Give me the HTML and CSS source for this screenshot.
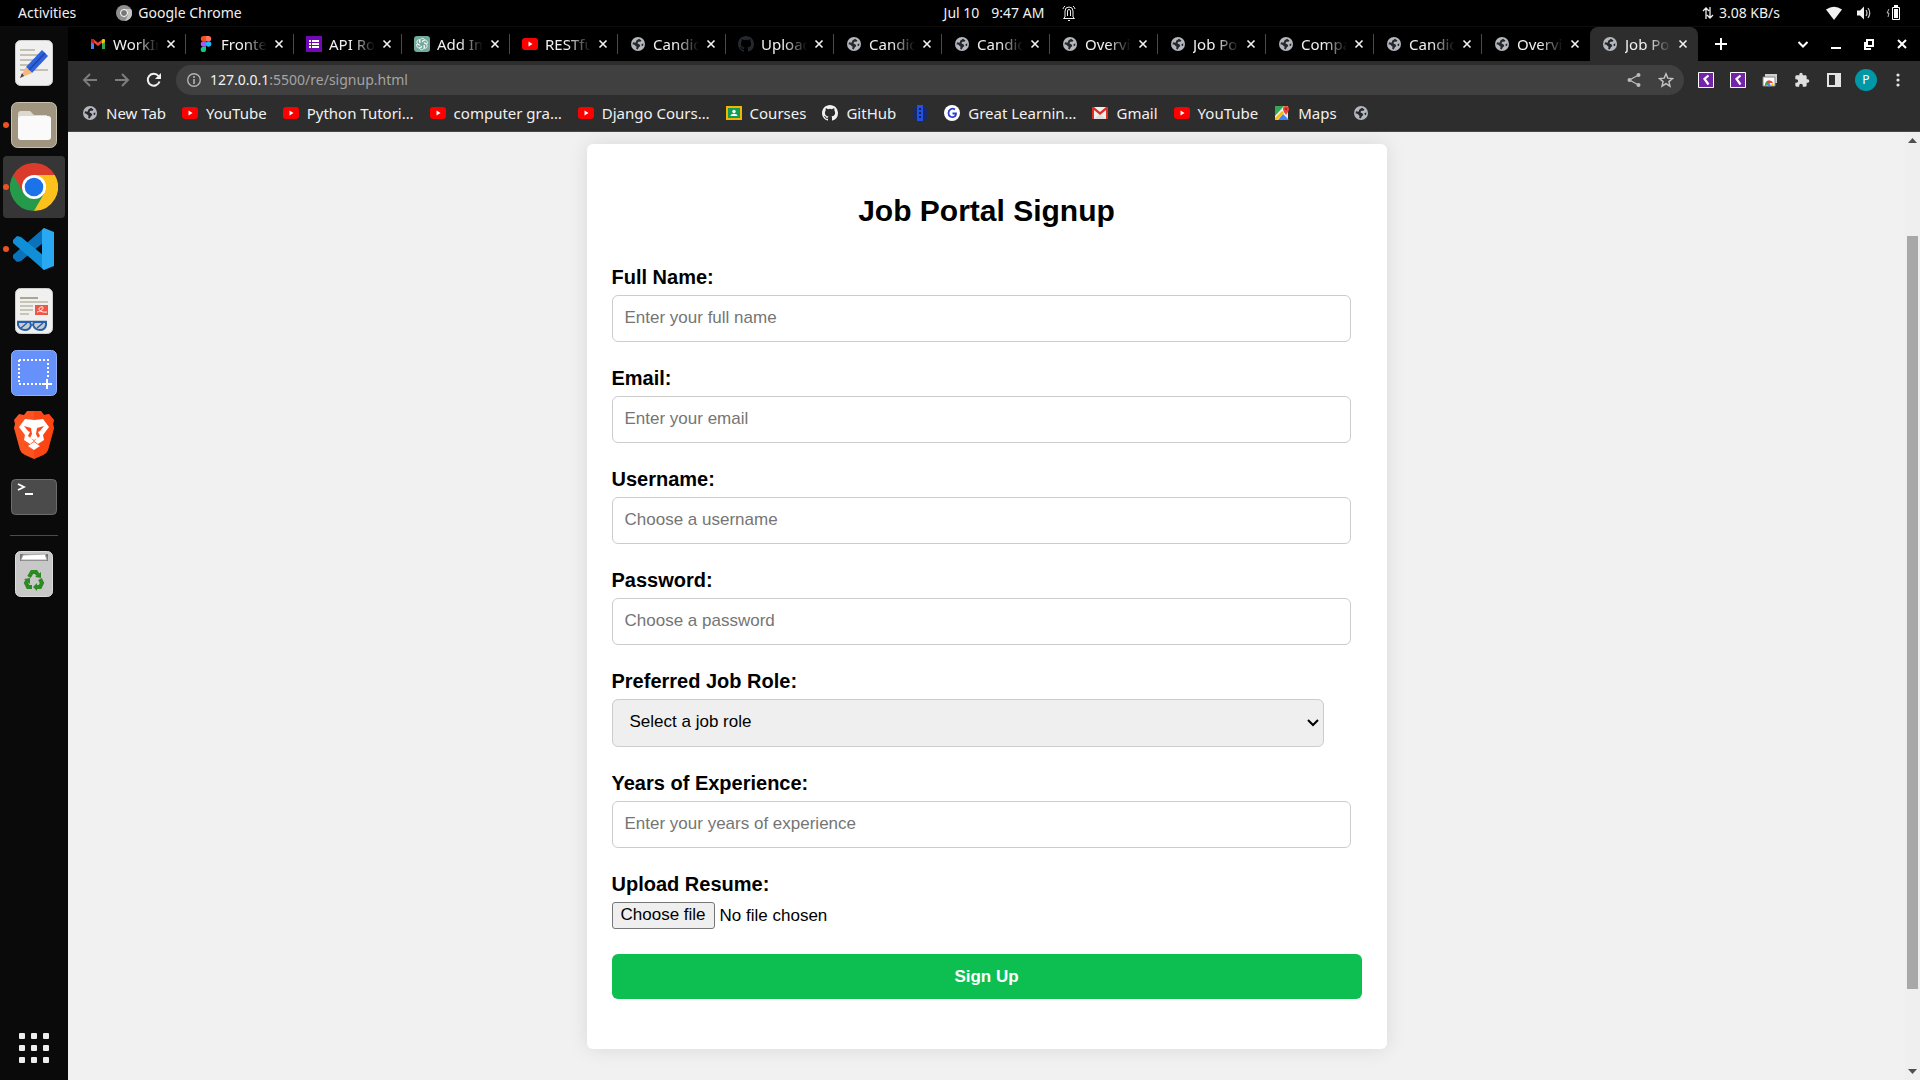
FILE: index.html
```html
<!DOCTYPE html>
<html lang="en">
<head>
<meta charset="utf-8">
<title>Job Portal Signup</title>
<link rel="stylesheet" href="styles.css">
</head>
<body>
<svg class="sprite" aria-hidden="true">
  <symbol id="globe" viewBox="0 0 16 16"><circle cx="8" cy="8" r="7" fill="#b4b8be"/><path d="M9 2.800l2.500 1.700-1 1.300H8.300L7.400 7.300l2.200 1.200.7 1.600-1.600 1.500-.8 1.800-1.700-.4.3-2.200L4 8.600 2.500 8.400 3 6.300l2.500.4.9-2.100z" fill="#25272a"/><path d="M11.500 8l2-.6-.6 2.800-1.300-.6z" fill="#25272a"/></symbol>
  <symbol id="youtube" viewBox="0 0 16 16"><rect y="2" width="16" height="12" rx="3" fill="#f00"/><path d="M6.500 5.500v5l4-2.500z" fill="#fff"/></symbol>
  <symbol id="gmail" viewBox="0 0 16 16"><path d="M1 4v9h3V7z" fill="#4285f4"/><path d="M15 4v9h-3V7z" fill="#34a853"/><path d="M1 4.500C1 3 2.500 2.500 3.500 3.300L8 6.700l4.500-3.400C13.500 2.500 15 3 15 4.500L8 10z" fill="#ea4335"/><path d="M12 3.700c1.500-1.200 3-.4 3 .8V6l-3 2z" fill="#fbbc04"/><path d="M4 3.700C2.500 2.500 1 3.300 1 4.500V6l3 2z" fill="#c5221f"/></symbol>
  <symbol id="gmail-old" viewBox="0 0 16 16"><path d="M0 2h16v12H0z" fill="#eee"/><path d="M2 14l6-5 6 5z" fill="#ddd"/><path d="M0 2h2l6 5 6-5h2v12h-2V5L8 10 2 5v9H0z" fill="#d93025"/></symbol>
  <symbol id="figma" viewBox="0 0 16 16"><path d="M5.500 0H8v5.300H5.500a2.650 2.650 0 010-5.300z" fill="#f24e1e"/><path d="M8 0h2.500a2.650 2.650 0 010 5.300H8z" fill="#ff7262"/><path d="M5.500 5.300H8v5.400H5.500a2.700 2.700 0 010-5.400z" fill="#a259ff"/><circle cx="10.600" cy="8" r="2.700" fill="#1abcfe"/><path d="M5.500 10.700H8v2.600a2.650 2.650 0 11-2.500-2.600z" fill="#0acf83"/></symbol>
  <symbol id="forms" viewBox="0 0 16 16"><path d="M0 0h16v16H0z" fill="#7209b7"/><path d="M3 4h2v2H3zm3 0h7v2H6zM3 7h2v2H3zm3 0h7v2H6zm-3 3h2v2H3zm3 0h7v2H6z" fill="#fff"/></symbol>
  <symbol id="chatgpt" viewBox="0 0 16 16"><rect width="16" height="16" rx="3" fill="#74aa9c"/><g fill="none" stroke="#fff" stroke-width=".8"><path id="petal" d="M6 7V4.500c0-2.500 3.500-3 4.500-.8L8 5.200"/><use href="#petal" transform="rotate(60 8 8)"/><use href="#petal" transform="rotate(120 8 8)"/><use href="#petal" transform="rotate(180 8 8)"/><use href="#petal" transform="rotate(240 8 8)"/><use href="#petal" transform="rotate(300 8 8)"/></g></symbol>
  <symbol id="github" viewBox="0 0 16 16"><path fill="currentColor" d="M8 0C3.580 0 0 3.580 0 8c0 3.540 2.290 6.530 5.470 7.590.4.070.55-.17.55-.38 0-.19-.01-.82-.01-1.490-2.010.37-2.530-.49-2.690-.94-.09-.23-.48-.94-.82-1.130-.28-.15-.68-.52-.01-.53.63-.01 1.080.58 1.230.82.72 1.210 1.870.87 2.330.66.07-.52.28-.87.51-1.070-1.780-.2-3.640-.89-3.640-3.950 0-.87.31-1.590.82-2.150-.08-.2-.36-1.020.08-2.120 0 0 .67-.21 2.200.82a7.600 7.600 0 014 0c1.530-1.040 2.200-.82 2.200-.82.44 1.100.16 1.920.08 2.120.51.56.82 1.270.82 2.150 0 3.070-1.870 3.750-3.650 3.950.29.25.54.73.54 1.480 0 1.070-.01 1.930-.01 2.200 0 .21.15.46.55.38A8 8 0 0016 8c0-4.420-3.580-8-8-8z"/></symbol>
  <symbol id="classroom" viewBox="0 0 16 16"><path d="M0 1h16v14H0z" fill="#f4b400"/><path d="M2 3h12v10H2z" fill="#0f9d58"/><circle cx="8" cy="6.500" r="1.700" fill="#fff"/><path d="M4.500 11c0-3 7-3 7 0z" fill="#fff"/></symbol>
  <symbol id="tower" viewBox="0 0 16 16"><path d="M1 2h4v12H1zm10 0h4v12h-4z" fill="#162a6c"/><path d="M5 0h6v16H5z" fill="#2450e0"/><path d="M7 3h2v2H7zm0 4h2v2H7zm0 4h2v2H7z" fill="#10205a"/></symbol>
  <symbol id="great" viewBox="0 0 16 16"><circle cx="8" cy="8" r="8" fill="#fff"/><path d="M11 4.500C8 2.500 4.500 4.500 4.500 8s3 4.500 5 4 2.500-2 2.500-3.500H8.500" fill="none" stroke="#2b3fd0" stroke-width="1.800"/></symbol>
  <symbol id="maps" viewBox="0 0 16 16"><path d="M1 1h13v14H1z" fill="#e8eaed"/><path d="M1 1h9L1 11z" fill="#34a853"/><path d="M4 15l5-6 6 6z" fill="#4285f4"/><path d="M1 12L11 2l2 2L3 15H1z" fill="#f1f1f1"/><path d="M1 13l7-7 2 2-7 7H1z" fill="#fbbc04"/><path d="M12 10c-1-2-3-3.500-3-6a3 3 0 016 0c0 2.500-2 4-3 6z" fill="#ea4335"/><circle cx="12" cy="4" r="1" fill="#8c1d18"/></symbol>
  <symbol id="close" viewBox="0 0 16 16"><path d="M4.500 4.500l7 7m0-7l-7 7" stroke="#f1f3f4" stroke-width="1.600"/></symbol>
  <symbol id="devtool" viewBox="0 0 16 16"><path d="M.5.500h15v15H.5z" fill="#7424a8" stroke="#fff"/><path d="M10.500 3.500L6.500 7l4 5.500" fill="none" stroke="#fff" stroke-width="2.200"/></symbol>
</svg>

<header class="system-bar">
  <div class="system-left"><span>Activities</span><span class="app-name"><svg width="16" height="16" viewBox="0 0 16 16"><circle cx="8" cy="8" r="8" fill="#8f8f8f"/><path d="M8 4h7a8 8 0 01-6 12l3-6z" fill="#c4c4c4"/><circle cx="8" cy="8" r="3.500" fill="#777" stroke="#fff"/></svg>Google Chrome</span></div>
  <div class="system-center"><span>Jul 10</span><span>9:47 AM</span><svg width="14" height="16" viewBox="0 0 14 16" fill="none" stroke="#eee"><path d="M3 12V6a4 4 0 018 0v6l1.500 1.500h-11zM5.500 11V6q0-1.500 1.500-1.500T8.500 6v5M1 4q.5-2 2-3m10 3q-.5-2-2-3"/><path d="M6 15.500h2"/></svg></div>
  <div class="system-right">
    <span class="net"><svg width="12" height="14" viewBox="0 0 12 14" fill="none" stroke="#eee" stroke-width="1.300"><path d="M4 13V2M1 5l3-3 3 3M8 1v11m-3-3l3 3 3-3"/></svg>3.08 KB/s</span>
    <svg width="16" height="16" viewBox="0 0 16 16"><path d="M0 4.500Q8-1 16 4.500L8 15z" fill="#f2f2f2"/></svg>
    <svg width="16" height="16" viewBox="0 0 16 16"><path d="M1 5.500h3l4-4v13l-4-4H1z" fill="#f2f2f2"/><path d="M10 5q2 3 0 6m2-8q3.500 5 0 10" fill="none" stroke="#ccc" stroke-width="1.200"/></svg>
    <svg width="16" height="16" viewBox="0 0 16 16"><path d="M3 4L1 8h2l-1 4" fill="none" stroke="#bbb"/><path d="M6.500 2.500h7v12h-7z" fill="none" stroke="#fff"/><path d="M8 0h4v2H8zM8 4h4v9H8z" fill="#fff"/></svg>
  </div>
</header>

<div class="desktop">
  <nav class="dock" aria-label="Applications">
    <button class="dock-item" aria-label="Text Editor"><svg viewBox="0 0 48 48"><rect x="5.500" y="1.500" width="37" height="45" rx="5" fill="#f0f0f0" stroke="#ccc"/><path d="M10 11h15M10 16h18M10 21h14M10 26h9M10 31h28" stroke="#c4c0b4" stroke-width="2"/><path d="M16 28L32 11l6 6-16 17z" fill="#2f62dd"/><path d="M19 31l16-17" stroke="#1c46b0" stroke-width="1.500"/><path d="M16 28l6 6-12 5z" fill="#f5b87a"/><path d="M12 34l2 3-4 2z" fill="#444"/></svg></button>
    <button class="dock-item running" aria-label="Files"><svg viewBox="0 0 48 48"><rect x="1.500" y="1.500" width="45" height="45" rx="6" fill="#a0967f" stroke="#c9c2b0"/><path d="M8 13q0-3 3-3h9l4 4h13v8H8z" fill="#ded9cd"/><rect x="8" y="15" width="33" height="24" rx="3" fill="#fafafa"/></svg></button>
    <button class="dock-item running active" aria-label="Google Chrome"><svg viewBox="0 0 48 48"><path d="M24 24L3.200 12A24 24 0 0144.800 12z" fill="#db3b2b"/><path d="M24 24l20.800-12A24 24 0 0124 48z" fill="#fcc21b"/><path d="M24 24L3.200 12A24 24 0 0024 48z" fill="#259a4b"/><path d="M24 12h20.800L34 30 24 48l10.400-18z" fill="#fcc21b"/><path d="M3.200 12L13.600 30 24 24V12z" fill="#db3b2b"/><path d="M13.600 30l10.400 6 10.400-6L24 48z" fill="#259a4b"/><circle cx="24" cy="24" r="12" fill="#fff"/><circle cx="24" cy="24" r="9.300" fill="#1a73e8"/></svg></button>
    <button class="dock-item running" aria-label="Visual Studio Code"><svg viewBox="0 0 48 48"><path d="M34 3L3 30v3l4 4 4-1 23-19z" fill="#0a72bb"/><path d="M34 45L3 18v-3l4-4 4 1 23 19z" fill="#108fd8"/><path d="M34 3l10 4v34l-10 4-2-2V5z" fill="#29a9f2"/></svg></button>
    <button class="dock-item" aria-label="Document Viewer"><svg viewBox="0 0 48 48"><rect x="5.500" y="1.500" width="37" height="45" rx="5" fill="#f0f0ee" stroke="#ccc"/><path d="M10 11h18" stroke="#aaa595" stroke-width="2"/><path d="M10 15h28M10 19h13M10 23h13M10 27h9" stroke="#c8c4b8" stroke-width="2"/><path d="M25 18h13v10H25z" fill="#f05545"/><path d="M27 25c6-1 8-6 4-5s-2 6 6 5" fill="none" stroke="#fff"/><path d="M8 35h12l1 3q-1 5-6 5t-7-5zm16 0h12v3q-1 5-6 5t-7-5z" fill="#c9cbd4" stroke="#285fa5" stroke-width="2"/><path d="M7 34.500h30M11 41l6-5m10 5l6-5" stroke="#285fa5" stroke-width="1.500"/></svg></button>
    <button class="dock-item" aria-label="Screenshot"><svg viewBox="0 0 48 48"><rect x="1.500" y="1.500" width="45" height="45" rx="5" fill="#6691fa" stroke="#93b0fa"/><path d="M9 11h29v18M9 11v24h23" fill="none" stroke="#fff" stroke-width="2" stroke-dasharray="2 2"/><path d="M37 30v10m-5-5h10" stroke="#fff" stroke-width="2"/></svg></button>
    <button class="dock-item" aria-label="Brave"><svg viewBox="0 0 48 48"><path d="M14 4l3-4h14l3 4 5-1 5 6-1 4 1 4-6 22q-1 3-5 5l-9 4-9-4q-4-2-5-5L4 17l1-4-1-4 5-6z" fill="#fb5420"/><path d="M24 0h7l3 4 5-1 5 6-1 4 1 4-6 22q-1 3-5 5l-9 4z" fill="#ff3a0c" opacity=".6"/><path d="M24 9l9-1 6 8-6 8 1 5-6 4-4-3-4 3-6-4 1-5-6-8 6-8zM24 31l6 4-6 4-6-4z" fill="#fff"/><path d="M14 15l7 2 1 6-2 4 4 2 4-2-2-4 1-6 7-2-4 5-2 1 2 4-6 5-6-5 2-4-2-1z" fill="#fb4a1c"/><path d="M22 14h4l-1 10h-2z" fill="#fff"/></svg></button>
    <button class="dock-item" aria-label="Terminal"><svg viewBox="0 0 48 48"><rect x="1.500" y="6.500" width="45" height="35" rx="4" fill="#4b4b4b" stroke="#6d6d6d"/><path d="M8 11l6 3-6 3M15 21h8" fill="none" stroke="#fff" stroke-width="1.800"/></svg></button>
    <hr class="dock-line">
    <button class="dock-item" aria-label="Trash"><svg viewBox="0 0 48 48"><rect x="5.500" y="1.500" width="37" height="45" rx="5" fill="#c8c8c8" stroke="#ddd"/><path d="M10 4h28v7H10z" fill="#777"/><path d="M11 10l2-5 22-1 2 6z" fill="#fff" stroke="#aaa"/><g fill="none" stroke="#2c8a22" stroke-width="4"><path d="M19 27l3-5h4l2 3"/><path d="M30 29l2 4-2 4h-4"/><path d="M22 37h-4l-2-4 1-2"/></g><path d="M31 22v6l-6-1zM27 33v8l-4-4zM14 29l6-1v6z" fill="#2c8a22"/></svg></button>
    <button class="dock-item apps" aria-label="Show Applications"><svg viewBox="0 0 48 48" fill="#eee"><g id="dots"><rect x="9" y="9" width="6" height="6" rx="1"/><rect x="21" y="9" width="6" height="6" rx="1"/><rect x="33" y="9" width="6" height="6" rx="1"/></g><use href="#dots" y="12"/><use href="#dots" y="24"/></svg></button>
  </nav>

  <div class="browser">
    <div class="tab-strip">
      <div class="tab"><svg class="icon"><use href="#gmail"/></svg><span class="tab-title">WorkIn</span><button class="tab-close" aria-label="Close tab"><svg class="icon"><use href="#close"/></svg></button></div>
      <div class="tab"><svg class="icon"><use href="#figma"/></svg><span class="tab-title">Fronte</span><button class="tab-close" aria-label="Close tab"><svg class="icon"><use href="#close"/></svg></button></div>
      <div class="tab"><svg class="icon"><use href="#forms"/></svg><span class="tab-title">API Ro</span><button class="tab-close" aria-label="Close tab"><svg class="icon"><use href="#close"/></svg></button></div>
      <div class="tab"><svg class="icon"><use href="#chatgpt"/></svg><span class="tab-title">Add Im</span><button class="tab-close" aria-label="Close tab"><svg class="icon"><use href="#close"/></svg></button></div>
      <div class="tab"><svg class="icon"><use href="#youtube"/></svg><span class="tab-title">RESTfu</span><button class="tab-close" aria-label="Close tab"><svg class="icon"><use href="#close"/></svg></button></div>
      <div class="tab"><svg class="icon"><use href="#globe"/></svg><span class="tab-title">Candid</span><button class="tab-close" aria-label="Close tab"><svg class="icon"><use href="#close"/></svg></button></div>
      <div class="tab"><svg class="icon dim"><use href="#github"/></svg><span class="tab-title">Upload</span><button class="tab-close" aria-label="Close tab"><svg class="icon"><use href="#close"/></svg></button></div>
      <div class="tab"><svg class="icon"><use href="#globe"/></svg><span class="tab-title">Candid</span><button class="tab-close" aria-label="Close tab"><svg class="icon"><use href="#close"/></svg></button></div>
      <div class="tab"><svg class="icon"><use href="#globe"/></svg><span class="tab-title">Candid</span><button class="tab-close" aria-label="Close tab"><svg class="icon"><use href="#close"/></svg></button></div>
      <div class="tab"><svg class="icon"><use href="#globe"/></svg><span class="tab-title">Overvi</span><button class="tab-close" aria-label="Close tab"><svg class="icon"><use href="#close"/></svg></button></div>
      <div class="tab"><svg class="icon"><use href="#globe"/></svg><span class="tab-title">Job Po</span><button class="tab-close" aria-label="Close tab"><svg class="icon"><use href="#close"/></svg></button></div>
      <div class="tab"><svg class="icon"><use href="#globe"/></svg><span class="tab-title">Compa</span><button class="tab-close" aria-label="Close tab"><svg class="icon"><use href="#close"/></svg></button></div>
      <div class="tab"><svg class="icon"><use href="#globe"/></svg><span class="tab-title">Candid</span><button class="tab-close" aria-label="Close tab"><svg class="icon"><use href="#close"/></svg></button></div>
      <div class="tab"><svg class="icon"><use href="#globe"/></svg><span class="tab-title">Overvi</span><button class="tab-close" aria-label="Close tab"><svg class="icon"><use href="#close"/></svg></button></div>
      <div class="tab current"><svg class="icon"><use href="#globe"/></svg><span class="tab-title">Job Po</span><button class="tab-close" aria-label="Close tab"><svg class="icon"><use href="#close"/></svg></button></div>
      <button class="tool" aria-label="New tab"><svg class="icon" viewBox="0 0 16 16"><path d="M8 2v12M2 8h12" stroke="#fff" stroke-width="2"/></svg></button>
      <div class="window-buttons">
        <button class="tool" aria-label="Search tabs"><svg class="icon" viewBox="0 0 16 16"><path d="M3.500 6L8 10.500 12.500 6" fill="none" stroke="#fff" stroke-width="2"/></svg></button>
        <button class="tool" aria-label="Minimize"><svg class="icon" viewBox="0 0 16 16"><path d="M3 12h10" stroke="#fff" stroke-width="2"/></svg></button>
        <button class="tool" aria-label="Restore"><svg class="icon" viewBox="0 0 16 16"><path d="M6 4h6v6H6zM4 6v7h6" fill="none" stroke="#fff" stroke-width="2"/></svg></button>
        <button class="tool" aria-label="Close window"><svg class="icon" viewBox="0 0 16 16"><path d="M4 4l8 8m0-8l-8 8" stroke="#fff" stroke-width="2"/></svg></button>
      </div>
    </div>

    <div class="toolbar">
      <button class="tool" aria-label="Back"><svg class="icon" viewBox="0 0 16 16"><path d="M15 8H2m6-6L2 8l6 6" fill="none" stroke="#7d7d7d" stroke-width="2"/></svg></button>
      <button class="tool" aria-label="Forward"><svg class="icon" viewBox="0 0 16 16"><path d="M1 8h13M8 2l6 6-6 6" fill="none" stroke="#7d7d7d" stroke-width="2"/></svg></button>
      <button class="tool" aria-label="Reload"><svg class="icon" viewBox="0 0 16 16"><path d="M13.500 9.500A6 6 0 1112.500 4" fill="none" stroke="#f1f1f1" stroke-width="2"/><path d="M15 1v6H9z" fill="#f1f1f1"/></svg></button>
      <div class="address">
        <svg class="icon" viewBox="0 0 16 16"><circle cx="8" cy="8" r="6.300" fill="none" stroke="#b0b3b7" stroke-width="1.400"/><path d="M8 7v5M8 4v2" stroke="#b0b3b7" stroke-width="1.600"/></svg>
        <span class="url"><b>127.0.0.1</b>:5500/re/signup.html</span>
        <button class="tool" aria-label="Share"><svg class="icon" viewBox="0 0 16 16"><path d="M12.500 3L3.500 8l9 5" fill="none" stroke="#bbb" stroke-width="1.300"/><g fill="#bbb"><circle cx="12.500" cy="3" r="2"/><circle cx="3.500" cy="8" r="2"/><circle cx="12.500" cy="13" r="2"/></g></svg></button>
        <button class="tool" aria-label="Bookmark this page"><svg class="icon" viewBox="0 0 16 16"><path d="M8 1.800l1.800 4.300 4.700.4-3.600 3.100 1.100 4.600L8 11.700l-4 2.500 1.100-4.600-3.600-3.100 4.700-.4z" fill="none" stroke="#c4c4c4" stroke-width="1.400"/></svg></button>
      </div>
      <button class="tool" aria-label="Extension"><svg class="icon"><use href="#devtool"/></svg></button>
      <button class="tool" aria-label="Extension"><svg class="icon"><use href="#devtool"/></svg></button>
      <button class="tool" aria-label="Gallery"><svg class="icon" viewBox="0 0 16 16"><path d="M3 2h12v9H3z" fill="#d0d0d0"/><path d="M1 5h12v9H1z" fill="#fff" stroke="#888"/><path d="M3 14a4 4 0 013-5l2 3z" fill="#34a853"/><path d="M4 10a4 4 0 017 1H7z" fill="#ea4335"/><path d="M11 11a4 4 0 010 3H8z" fill="#fbbc04"/><circle cx="7" cy="13" r="1.500" fill="#4285f4"/></svg></button>
      <button class="tool" aria-label="Extensions"><svg class="icon" viewBox="0 0 24 24"><path fill="#dedede" d="M20.500 11H19V7c0-1.100-.9-2-2-2h-4V3.500a2.500 2.500 0 00-5 0V5H4c-1.100 0-2 .9-2 2v3.800h1.500a2.700 2.700 0 010 5.400H2V20c0 1.100.9 2 2 2h3.800v-1.500a2.700 2.700 0 015.400 0V22H17c1.100 0 2-.9 2-2v-4h1.500a2.500 2.500 0 000-5z"/></svg></button>
      <button class="tool" aria-label="Side panel"><svg class="icon" viewBox="0 0 16 16"><path d="M1 1h14v14H1zM3 3v10h6V3z" fill="#e4e4e4" fill-rule="evenodd"/></svg></button>
      <button class="tool" aria-label="Profile"><span class="avatar">P</span></button>
      <button class="tool" aria-label="Menu"><svg class="icon" viewBox="0 0 16 16" fill="#e4e4e4"><circle cx="8" cy="3" r="1.600"/><circle cx="8" cy="8" r="1.600"/><circle cx="8" cy="13" r="1.600"/></svg></button>
    </div>

    <nav class="bookmarks" aria-label="Bookmarks">
      <a href="#"><svg class="icon"><use href="#globe"/></svg><span>New Tab</span></a>
      <a href="#"><svg class="icon"><use href="#youtube"/></svg><span>YouTube</span></a>
      <a href="#"><svg class="icon"><use href="#youtube"/></svg><span>Python Tutori…</span></a>
      <a href="#"><svg class="icon"><use href="#youtube"/></svg><span>computer gra…</span></a>
      <a href="#"><svg class="icon"><use href="#youtube"/></svg><span>Django Cours…</span></a>
      <a href="#"><svg class="icon"><use href="#classroom"/></svg><span>Courses</span></a>
      <a href="#"><svg class="icon"><use href="#github"/></svg><span>GitHub</span></a>
      <a href="#" aria-label="Tower"><svg class="icon"><use href="#tower"/></svg></a>
      <a href="#"><svg class="icon"><use href="#great"/></svg><span>Great Learnin…</span></a>
      <a href="#"><svg class="icon"><use href="#gmail-old"/></svg><span>Gmail</span></a>
      <a href="#"><svg class="icon"><use href="#youtube"/></svg><span>YouTube</span></a>
      <a href="#"><svg class="icon"><use href="#maps"/></svg><span>Maps</span></a>
      <a href="#" aria-label="Site"><svg class="icon"><use href="#globe"/></svg></a>
    </nav>

    <div class="viewport">
      <main class="page">
        <form class="card">
          <h1>Job Portal Signup</h1>
          <div class="field"><label for="name">Full Name:</label><input id="name" type="text" placeholder="Enter your full name"></div>
          <div class="field"><label for="email">Email:</label><input id="email" type="email" placeholder="Enter your email"></div>
          <div class="field"><label for="username">Username:</label><input id="username" type="text" placeholder="Choose a username"></div>
          <div class="field"><label for="password">Password:</label><input id="password" type="password" placeholder="Choose a password"></div>
          <div class="field"><label for="role">Preferred Job Role:</label><select id="role"><option>Select a job role</option></select></div>
          <div class="field"><label for="years">Years of Experience:</label><input id="years" type="number" placeholder="Enter your years of experience"></div>
          <div class="field"><label for="resume">Upload Resume:</label>
            <div class="file-row"><input id="resume" class="file-input" type="file"><label class="file-button" for="resume">Choose file</label><span>No file chosen</span></div>
          </div>
          <button class="submit" type="submit">Sign Up</button>
        </form>
      </main>
      <div class="scrollbar" aria-hidden="true">
        <svg width="9" height="5" viewBox="0 0 9 5"><path d="M0 5L4.500 0 9 5z"/></svg>
        <div class="track"><div class="thumb"></div></div>
        <svg width="9" height="5" viewBox="0 0 9 5"><path d="M0 0l4.500 5L9 0z"/></svg>
      </div>
    </div>
  </div>
</div>
</body>
</html>
```
FILE: styles.css
```css
* { box-sizing: border-box; }

body {
  margin: 0;
  min-height: 100vh;
  display: flex;
  flex-direction: column;
  background: #000;
  color: #f1f1f1;
  font: 14px/20px "Noto Sans", "Open Sans", sans-serif;
}

button {
  margin: 0;
  padding: 0;
  border: 0;
  background: none;
  color: inherit;
  font: inherit;
}

svg { display: block; flex: none; }
.sprite { position: absolute; width: 0; height: 0; }
.icon { width: 16px; height: 16px; }

/* System bar */
.system-bar {
  display: grid;
  grid-template-columns: 1fr auto 1fr;
  align-items: center;
  height: 27px;
  padding: 0 18px;
  background: #000;
  border-bottom: 1px solid #0c0c0c;
}
.system-left, .system-center, .system-right, .app-name, .net {
  display: flex;
  align-items: center;
}
.system-left { gap: 40px; }
.app-name { gap: 6px; }
.system-center { gap: 12px; padding-left: 100px; }
.system-center svg { margin-left: 6px; }
.system-right { justify-content: flex-end; gap: 14px; }
.net { gap: 5px; margin-right: 32px; }

.desktop { flex: 1; display: flex; }

/* Dock */
.dock {
  flex: none;
  width: 68px;
  display: flex;
  flex-direction: column;
  align-items: center;
  padding: 5px 3px 1px;
  background: #0a0a0a;
}
.dock-item {
  position: relative;
  width: 62px;
  height: 62px;
  padding: 7px;
  border-radius: 4px;
}
.dock-item.active { background: #363636; }
.dock-item.running::before {
  content: "";
  position: absolute;
  left: 0;
  top: 28px;
  width: 6px;
  height: 6px;
  border-radius: 50%;
  background: #e95420;
}
.dock-line {
  width: 48px;
  margin: 7px 0;
  border: 0;
  border-top: 1px solid #4c4c4c;
}
.apps { margin-top: auto; }

/* Browser window */
.browser {
  flex: 1;
  min-width: 0;
  display: flex;
  flex-direction: column;
  background: #2d2d2d;
}
.tab-strip {
  display: flex;
  align-items: center;
  height: 34px;
  padding: 0 2px 0 10px;
  background: #000;
}
.tab {
  position: relative;
  flex: 0 1 108px;
  min-width: 0;
  height: 34px;
  display: flex;
  align-items: center;
  padding: 0 7px 0 12px;
  font-size: 15px;
}
.tab::after {
  content: "";
  position: absolute;
  right: 0;
  top: 7px;
  height: 20px;
  border-right: 1px solid #4a4a4a;
}
.tab.current { background: #2d2d2d; border-radius: 8px 8px 0 0; }
.tab.current::after, .tab:has(+ .current)::after { display: none; }
.tab-title {
  flex: 1;
  min-width: 0;
  margin-left: 7px;
  overflow: hidden;
  white-space: nowrap;
  mask-image: linear-gradient(to right, #000 50%, transparent 100%);
}
.tab-close { margin-left: 4px; }
.dim { color: #24292f; }

.tool {
  flex: none;
  width: 32px;
  height: 30px;
  display: flex;
  align-items: center;
  justify-content: center;
}
.tab + .tool { margin-left: 7px; }
.window-buttons { display: flex; gap: 1px; margin-left: auto; }

.toolbar {
  display: flex;
  align-items: center;
  height: 38px;
  padding: 0 6px;
}
.address {
  flex: 1;
  display: flex;
  align-items: center;
  height: 30px;
  margin: 0 6px;
  padding: 0 2px 0 10px;
  border-radius: 15px;
  background: #404040;
}
.url { flex: 1; margin-left: 8px; color: #a4a4a4; }
.url b { font-weight: 400; color: #f1f1f1; }
.avatar {
  width: 22px;
  height: 22px;
  border-radius: 50%;
  background: #0097a7;
  color: #fff;
  font-size: 12px;
  line-height: 22px;
}

.bookmarks {
  display: flex;
  align-items: center;
  gap: 16px;
  height: 33px;
  padding: 0 14px 5px;
  border-bottom: 1px solid #4a4748;
  font-size: 15px;
}
.bookmarks a {
  display: flex;
  align-items: center;
  gap: 8px;
  color: inherit;
  text-decoration: none;
  white-space: nowrap;
}

/* Web page */
.viewport { flex: 1; display: flex; background: #f1f1f1; }
.page {
  flex: 1;
  display: flex;
  justify-content: center;
  align-items: flex-start;
  padding: 12px 20px 30px;
  color: #000;
  font: 17px/20px "Liberation Sans", Arial, sans-serif;
}
.card {
  width: 100%;
  max-width: 800px;
  padding: 25px 25px 50px;
  border-radius: 6px;
  background: #fff;
  box-shadow: 0 0 20px rgba(0, 0, 0, .1);
}
.card h1 {
  margin: 25px 0 38px;
  font-size: 30px;
  line-height: 34px;
  text-align: center;
}
.field { margin-bottom: 25px; }
.field > label {
  display: block;
  margin-bottom: 6px;
  font-size: 20px;
  line-height: 23px;
  font-weight: 700;
}
.field > input, .field > select {
  display: block;
  height: 47px;
  padding: 11px 12px 13px;
  border: 1px solid #ccc;
  border-radius: 6px;
  background: #fff;
  color: #000;
  font: inherit;
}
.field > input { width: 739px; max-width: 100%; }
.field > input::placeholder { color: #757575; }
.field > select {
  width: 95%;
  height: 48px;
  padding-left: 17px;
  appearance: none;
  background: #efefef url("data:image/svg+xml,%3Csvg xmlns='http://www.w3.org/2000/svg' width='12' height='8' viewBox='0 0 12 8'%3E%3Cpath d='M1 1l5 5 5-5' fill='none' stroke='%23000' stroke-width='2'/%3E%3C/svg%3E") no-repeat right 4px center;
}
.file-row { display: flex; align-items: center; gap: 5px; }
.file-input { position: absolute; width: 1px; height: 1px; opacity: 0; }
.file-button {
  padding: 2px 8px 3px;
  border: 1px solid #767676;
  border-radius: 3px;
  background: #efefef;
}
.submit {
  display: block;
  width: 100%;
  height: 45px;
  border-radius: 6px;
  background: #0dbf50;
  color: #fff;
  font-weight: 700;
}

.scrollbar {
  flex: none;
  width: 15px;
  display: flex;
  flex-direction: column;
  align-items: center;
  gap: 6px;
  padding: 6px 0;
  background: #efefef;
  fill: #505050;
}
.track { flex: 1; width: 11px; padding-bottom: 74px; display: flex; flex-direction: column; }
.thumb { flex: 1; margin-top: 87px; background: #a8a8a8; }
```
